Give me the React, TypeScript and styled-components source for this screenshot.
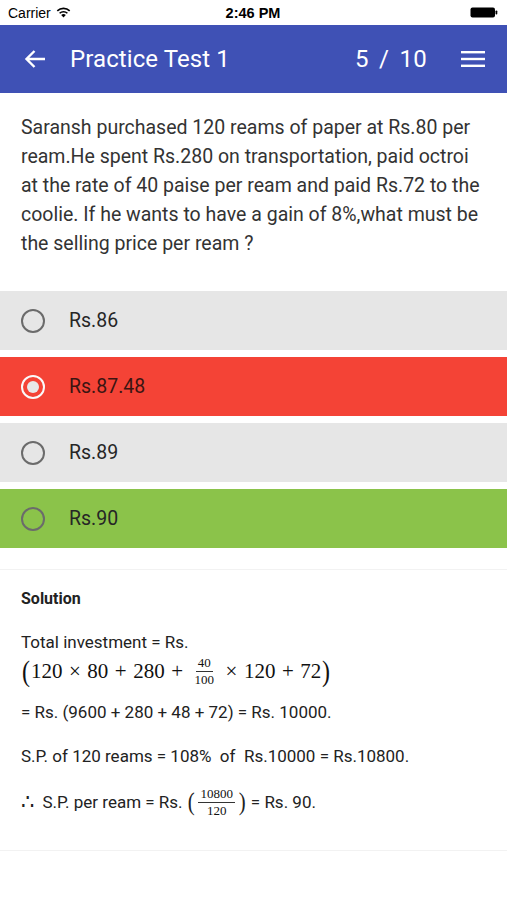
import React from 'react';
import styled, { createGlobalStyle } from 'styled-components';

const GlobalStyle = createGlobalStyle`
  html, body {
    margin: 0;
    padding: 0;
    background: #ffffff;
  }
  body {
    font-family: Roboto, 'Liberation Sans', sans-serif;
    -webkit-font-smoothing: antialiased;
  }
`;

const Screen = styled.div`
  width: 507px;
  min-height: 900px;
  background: #fff;
  display: flex;
  flex-direction: column;
`;

const StatusBar = styled.div`
  height: 25px;
  display: grid;
  grid-template-columns: 1fr auto 1fr;
  align-items: center;
  padding: 0 9px 0 8px;
  font-family: 'Liberation Sans', Arial, sans-serif;
  font-size: 14px;
  color: #000;
`;

const Carrier = styled.div`
  display: flex;
  align-items: center;
  gap: 5px;
`;

const Clock = styled.div`
  font-weight: 700;
  font-size: 14.5px;
`;

const BatteryWrap = styled.div`
  display: flex;
  justify-content: flex-end;
`;

const Toolbar = styled.header`
  height: 68px;
  background: #3f51b5;
  color: #fff;
  display: flex;
  align-items: center;
  padding: 0 22px 0 24px;
  box-sizing: border-box;
`;

const Title = styled.h1`
  margin: 0 0 0 24px;
  flex: 1;
  font-size: 24px;
  font-weight: 400;
  letter-spacing: 0.1px;
`;

const Counter = styled.span`
  font-size: 24px;
  margin-right: 34px;
  word-spacing: 4px;
  letter-spacing: 0.3px;
`;

const Question = styled.p`
  margin: 0;
  padding: 20px 21px 33px 21px;
  font-size: 19.5px;
  line-height: 29px;
  color: #333;
`;

const Options = styled.div`
  display: flex;
  flex-direction: column;
  gap: 7px;
`;

const Option = styled.div<{ $bg: string }>`
  height: 59px;
  background: ${({ $bg }) => $bg};
  display: flex;
  align-items: center;
  padding-left: 21px;
  gap: 24px;
  font-size: 19.5px;
  color: ${({ $bg }) => ($bg === '#f44336' ? '#3b1512' : '#262626')};
`;

const Radio = styled.span<{ $checked?: boolean }>`
  width: 24px;
  height: 24px;
  box-sizing: border-box;
  border-radius: 50%;
  border: 2px solid ${({ $checked }) => ($checked ? '#fafafa' : '#6b6b6b')};
  display: flex;
  align-items: center;
  justify-content: center;
  &::after {
    content: '';
    display: ${({ $checked }) => ($checked ? 'block' : 'none')};
    width: 12px;
    height: 12px;
    border-radius: 50%;
    background: #e8e8e8;
  }
`;

const Solution = styled.section`
  margin-top: 21px;
  border-top: 1px solid #f2f2f2;
  border-bottom: 1px solid #f2f2f2;
  padding: 18px 21px 30px 21px;
  color: #222;
  font-size: 17px;
`;

const SolutionTitle = styled.h2`
  margin: 0 0 21px 0;
  font-size: 16px;
  font-weight: 700;
  line-height: 22px;
`;

const Line = styled.div<{ $gap?: number; $tall?: boolean }>`
  line-height: 22px;
  height: ${({ $tall }) => ($tall ? 36 : 22)}px;
  margin-top: ${({ $gap }) => $gap ?? 0}px;
  display: flex;
  align-items: center;
  white-space: pre;
`;

const MathLine = styled.div`
  font-family: 'Liberation Serif', serif;
  font-size: 21px;
  display: flex;
  align-items: center;
  height: 36px;
  color: #111;
`;

const Paren = styled.span<{ $size: number }>`
  font-family: 'Liberation Serif', serif;
  font-size: ${({ $size }) => $size}px;
  font-weight: 300;
  line-height: 1;
  transform: scaleX(0.8);
  display: inline-block;
`;

const Op = styled.span`
  margin: 0 6.5px;
`;

const Frac = styled.span<{ $size: number }>`
  display: inline-flex;
  flex-direction: column;
  align-items: center;
  font-family: 'Liberation Serif', serif;
  font-size: ${({ $size }) => $size}px;
  line-height: 1.05;
  margin: 0 3px;
  color: #111;
`;

const Num = styled.span`
  padding: 0 2px 1px;
  border-bottom: 1px solid #333;
`;

const Den = styled.span`
  padding: 1px 2px 0;
`;

const Serif = styled.span`
  font-family: 'Liberation Serif', serif;
  font-size: 21px;
`;

const options = [
  { label: 'Rs.86', bg: '#e6e6e6' },
  { label: 'Rs.87.48', bg: '#f44336', checked: true },
  { label: 'Rs.89', bg: '#e6e6e6' },
  { label: 'Rs.90', bg: '#8bc34a' },
];

const App: React.FC = () => {
  return (
    <Screen>
      <GlobalStyle />
      <StatusBar>
        <Carrier>
          Carrier
          <svg width="15" height="11" viewBox="0 0 15 11">
            <path d="M7.5 10.5 L5.2 8 A3.3 3.3 0 0 1 9.8 8 Z" fill="#000" />
            <path d="M3.6 6.3 A5.6 5.6 0 0 1 11.4 6.3" stroke="#000" strokeWidth="1.6" fill="none" />
            <path d="M1.3 3.9 A9 9 0 0 1 13.7 3.9" stroke="#000" strokeWidth="1.6" fill="none" />
          </svg>
        </Carrier>
        <Clock>2:46 PM</Clock>
        <BatteryWrap>
          <svg width="28" height="11" viewBox="0 0 28 11">
            <rect x="0.5" y="0.5" width="24.5" height="10" rx="2" fill="#000" />
            <rect x="25.5" y="3.5" width="1.8" height="4" rx="0.8" fill="#000" />
          </svg>
        </BatteryWrap>
      </StatusBar>

      <Toolbar>
        <svg width="22" height="20" viewBox="0 0 22 20">
          <path d="M21 10 H3 M10.5 2 L2.5 10 L10.5 18" stroke="#fff" strokeWidth="2.4" fill="none" />
        </svg>
        <Title>Practice Test 1</Title>
        <Counter>5 / 10</Counter>
        <svg width="24" height="18" viewBox="0 0 24 18">
          <rect x="0" y="1" width="24" height="2.4" fill="#fff" />
          <rect x="0" y="7.8" width="24" height="2.4" fill="#fff" />
          <rect x="0" y="14.6" width="24" height="2.4" fill="#fff" />
        </svg>
      </Toolbar>

      <Question>
        Saransh purchased 120 reams of paper at Rs.80 per ream.He spent Rs.280 on transportation, paid octroi at the
        rate of 40 paise per ream and paid Rs.72 to the coolie. If he wants to have a gain of 8%,what must be the
        selling price per ream ?
      </Question>

      <Options>
        {options.map((o) => (
          <Option key={o.label} $bg={o.bg}>
            <Radio $checked={o.checked} />
            {o.label}
          </Option>
        ))}
      </Options>

      <Solution>
        <SolutionTitle>Solution</SolutionTitle>
        <Line>Total investment = Rs.</Line>
        <MathLine>
          <Paren $size={30}>(</Paren>
          120<Op>×</Op>80<Op>+</Op>280<Op>+</Op>
          <Frac $size={13}>
            <Num>40</Num>
            <Den>100</Den>
          </Frac>
          <Op>×</Op>120<Op>+</Op>72
          <Paren $size={30}>)</Paren>
        </MathLine>
        <Line $gap={12}>= Rs. (9600 + 280 + 48 + 72) = Rs. 10000.</Line>
        <Line $gap={22}>S.P. of 120 reams = 108%  of  Rs.10000 = Rs.10800.</Line>
        <Line $gap={17} $tall>
          <Serif>∴</Serif>  S.P. per ream = Rs.{' '}
          <Paren $size={26}>(</Paren>
          <Frac $size={13}>
            <Num>10800</Num>
            <Den>120</Den>
          </Frac>
          <Paren $size={26}>)</Paren> = Rs. 90.
        </Line>
      </Solution>
    </Screen>
  );
};

export default App;
